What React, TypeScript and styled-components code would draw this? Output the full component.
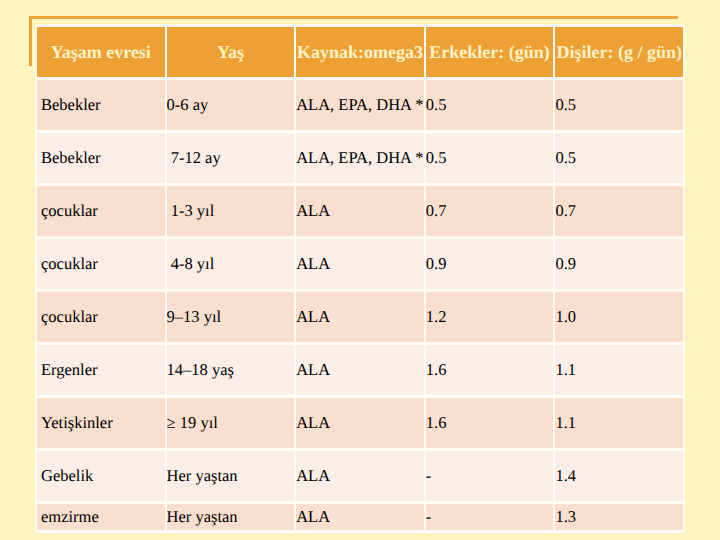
import React from "react";
import styled, { createGlobalStyle } from "styled-components";

const serif = `"Liberation Serif", "Times New Roman", Times, serif`;

const GlobalStyle = createGlobalStyle`
  html, body {
    margin: 0;
    padding: 0;
    background: #fff4be;
  }
  body {
    width: 720px;
    height: 540px;
    overflow: hidden;
    font-family: ${serif};
    text-rendering: geometricPrecision;
  }
`;

const Page = styled.div`
  width: 720px;
  height: 540px;
  box-sizing: border-box;
  padding: 16px 0 0 29px;
  background: #fff4be;
  font-family: ${serif};
`;

const Frame = styled.div`
  position: relative;
  padding: 8px 0 0 6px;
  &::before {
    content: "";
    position: absolute;
    left: 0;
    top: 0;
    width: 646px;
    height: 47px;
    border-top: 3px solid #e9a43c;
    border-left: 3px solid #e9a43c;
    pointer-events: none;
  }
`;

const Table = styled.table`
  width: 650px;
  table-layout: fixed;
  border-collapse: separate;
  border-spacing: 2px 3px;
  background: #fffaf4;
  font-family: ${serif};
  font-size: 16.5px;
  color: #000;
`;

const HeadCell = styled.th`
  height: 50px;
  padding: 0;
  background: #eda135;
  color: #fff2c6;
  font-family: ${serif};
  font-weight: bold;
  font-size: 18px;
  text-align: center;
  vertical-align: middle;
  white-space: nowrap;
`;

const Row = styled.tr<{ $dark: boolean }>`
  background: ${(p) => (p.$dark ? "#f8dfcf" : "#fbeee7")};
`;

const Cell = styled.td<{ $first?: boolean; $short?: boolean }>`
  height: ${(p) => (p.$short ? "26px" : "50px")};
  padding: 0 0 0 ${(p) => (p.$first ? "4px" : "0")};
  font-family: ${serif};
  font-size: 16.5px;
  vertical-align: middle;
  text-align: left;
  line-height: 20px;
  white-space: pre-wrap;
  overflow: hidden;
`;

const headers = ["Yaşam evresi", "Yaş", "Kaynak:omega3", "Erkekler: (gün)", "Dişiler: (g / gün)"];

const rows: string[][] = [
  ["Bebekler", "0-6 ay", "ALA, EPA, DHA *", "0.5", "0.5"],
  ["Bebekler", " 7-12 ay", "ALA, EPA, DHA *", "0.5", "0.5"],
  ["çocuklar", " 1-3 yıl", "ALA", "0.7", "0.7"],
  ["çocuklar", " 4-8 yıl", "ALA", "0.9", "0.9"],
  ["çocuklar", "9–13 yıl", "ALA", "1.2", "1.0"],
  ["Ergenler", "14–18 yaş", "ALA", "1.6", "1.1"],
  ["Yetişkinler", "≥ 19 yıl", "ALA", "1.6", "1.1"],
  ["Gebelik", "Her yaştan", "ALA", "-", "1.4"],
  ["emzirme", "Her yaştan", "ALA", "-", "1.3"],
];

export default function App() {
  return (
    <>
      <GlobalStyle />
      <Page>
        <Frame>
          <Table>
            <thead>
              <tr>
                {headers.map((h) => (
                  <HeadCell key={h}>{h}</HeadCell>
                ))}
              </tr>
            </thead>
            <tbody>
              {rows.map((r, i) => (
                <Row key={i} $dark={i % 2 === 0}>
                  {r.map((c, j) => (
                    <Cell key={j} $first={j === 0} $short={i === rows.length - 1}>
                      {c}
                    </Cell>
                  ))}
                </Row>
              ))}
            </tbody>
          </Table>
        </Frame>
      </Page>
    </>
  );
}
